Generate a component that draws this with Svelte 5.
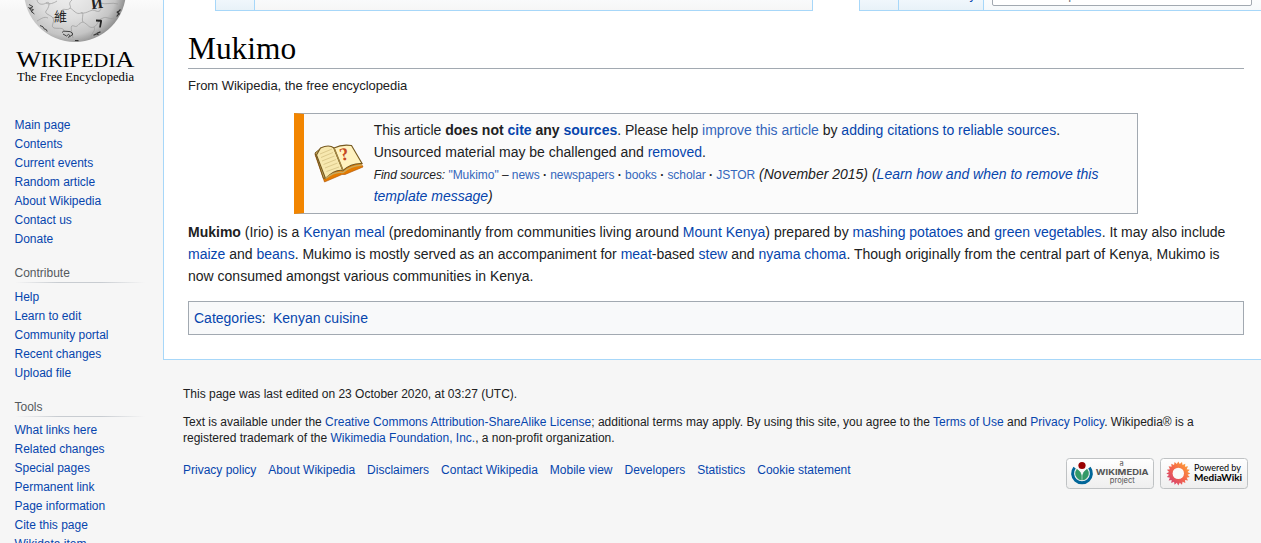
<script>
  const groups = [
    { title: '', items: ['Main page', 'Contents', 'Current events', 'Random article', 'About Wikipedia', 'Contact us', 'Donate'] },
    { title: 'Contribute', items: ['Help', 'Learn to edit', 'Community portal', 'Recent changes', 'Upload file'] },
    { title: 'Tools', items: ['What links here', 'Related changes', 'Special pages', 'Permanent link', 'Page information', 'Cite this page', 'Wikidata item'] }
  ];
  const footerLinks = ['Privacy policy', 'About Wikipedia', 'Disclaimers', 'Contact Wikipedia', 'Mobile view', 'Developers', 'Statistics', 'Cookie statement'];
  // Pointed outline of the sunflower mark
  const petals = 20;
  const sunflower = Array.from({ length: petals * 2 }, (_, i) => {
    const r = i % 2 ? 9.4 : 12;
    const a = (i * Math.PI) / petals;
    return `${(18.3 + r * Math.cos(a)).toFixed(2)},${(15.4 + r * Math.sin(a)).toFixed(2)}`;
  }).join(' ');
</script>

<div class="page">
  <aside>
    <svg class="logo" width="163" height="90" viewBox="0 0 163 90">
      <defs>
        <radialGradient id="globe" gradientUnits="userSpaceOnUse" cx="68" cy="-14" r="66">
          <stop offset="0" stop-color="#f4f4f4" /><stop offset=".5" stop-color="#dedede" /><stop offset=".75" stop-color="#c4c4c4" /><stop offset="1" stop-color="#6d6d6d" />
        </radialGradient>
      </defs>
      <circle cx="75" cy="-9" r="51" fill="url(#globe)" />
      <g fill="none" stroke="#999" stroke-width=".7">
        <path d="M37 0c1 5 6 5 9 3 5-3 3 5 0 8-2 3 5 4 7 7M46 3c3 2 8 0 11-2M72 0c-5 4 0 6-2 8-3 4-9-2-8 5 1 4-5 3-9 5M70 8c4 2 6 7 11 5 4-2 0 6 2 9M81 13c7 1 10-5 15-2 5 2 6-3 4-8M83 22c-5 1-5 6-9 4-5-2-2 6-1 12M83 22c5 2 6 7 11 5 5-3 3-7 9-9M53 18c2 5-3 8 1 10 6 1 9-1 10 3M94 27c2 4-2 5-3 10M37 21c4-2 7-5 11-3M103 18c4-2 6 2 11 0M100 3c7 2 11-1 18 1" />
      </g>
      <g fill="#222" class="glyphs">
        <text x="54" y="21" font-size="13">維</text>
        <text class="serif" x="91" y="8.5" font-size="15" transform="rotate(-8 97 4)">И</text>
        <path d="M96 19.6l5.2.2q1 .2.8 1.6l-1.2 6h-1.6l.8-5.6-4-.2z" />
        <path d="M62 32.5q1.5-2 4-1.2q5-.3 6.4 1.8q1 2.400-1.800 2.700M63 34l3.500 2 2-1.600 2 1.800-2.500 1.200" fill="none" stroke="#333" stroke-width=".9" />
        <path d="M29 4.500l4 2.200-3.300 1.600 3.800 1.400-2.500 1.600 3.400 2.700M28.500 7l4 5.500M40 25.500l3 1.300 1 2 2.300.8.9 1.900" fill="none" stroke="#333" stroke-width=".9" />
        <path d="M120.500 9.500l-3 3.200 1.500.8-2.300 3M117 11.500l2.500 3M93.500 35.300l3.500-1.600 1.400 1M97 33.200l3.500-1.300M75 40.500l3.500.2" fill="none" stroke="#333" stroke-width="1.200" />
      </g>
      <g class="wordmark">
        <text x="16" y="67" font-size="24" textLength="118.500" lengthAdjust="spacingAndGlyphs">W<tspan font-size="18.500">IKIPEDI</tspan>A</text>
        <text x="17" y="81" font-size="13.500" textLength="117" lengthAdjust="spacingAndGlyphs">The Free Encyclopedia</text>
      </g>
    </svg>
    {#each groups as g}
      <nav>
        {#if g.title}<h3>{g.title}</h3>{/if}
        <ul>{#each g.items as item}<li><a href="#top">{item}</a></li>{/each}</ul>
      </nav>
    {/each}
  </aside>

  <div class="content">
    <div class="tabs">
      <span class="selected first"></span>
      <span class="tab talk"></span>
      <span class="tab blank"></span>
      <span class="selected read"></span>
      <span class="tab edit"></span>
      <span class="tab history"><span>View history</span></span>
      <span class="tab searchbar"><span class="search"><span>Search Wikipedia</span></span></span>
    </div>
    <main>
      <h1>Mukimo</h1>
      <div class="sub">From Wikipedia, the free encyclopedia</div>
      <div class="notice">
        <svg width="50" height="42" viewBox="0 0 50 42">
          <path d="M1 11.500 10.500 39 28 31.500 31 31.500 49 24 46 18 12 33Z" fill="#e57b00" stroke="#a94f00" stroke-width=".6" />
          <path d="M1 10 6.500 5.500 12 34.500 9.500 35.500Z" fill="#cfae62" stroke="#75581f" stroke-width="1" />
          <path d="M6.500 5Q15 1 20 5L29 27.500Q21 26 11.500 35.500L2.500 12Z" fill="#f7e8af" stroke="#75581f" stroke-width="1.100" />
          <path d="M20 5Q28 1 37.500 2.500L48 20.500Q37 20 29 27.500Z" fill="#fff2c0" stroke="#75581f" stroke-width="1.100" />
          <path d="M11.500 35.500Q21 28 29 29.500Q37 22.500 48 22" fill="none" stroke="#c9a95c" stroke-width="1.400" />
          <path d="M20 5 29 27.500" stroke="#a08443" stroke-width="1.600" />
          <path d="m6 11 12-5m-11 8.500 12-5m-11 8.500 12.500-5m-11 8.500 12.500-5m-11 8.500 12.500-5m-11 8.500 12.500-4.500" stroke="#dcc98c" stroke-width="1" />
          <text x="26" y="17" transform="rotate(-14 31 12)">?</text>
        </svg>
        <div class="notice-text">
          <div>This article <b>does not <a href="#top">cite</a> any <a href="#top">sources</a></b>. Please help <a class="ext" href="#top">improve this article</a> by <a href="#top">adding citations to reliable sources</a>.</div>
          <div>Unsourced material may be challenged and <a href="#top">removed</a>.</div>
          <div><small><i>Find sources:</i> <a class="ext" href="#top">"Mukimo"</a> – <a class="ext" href="#top">news</a> <b>·</b> <a class="ext" href="#top">newspapers</a> <b>·</b> <a class="ext" href="#top">books</a> <b>·</b> <a class="ext" href="#top">scholar</a> <b>·</b> <a class="ext" href="#top">JSTOR</a></small> <i>(November 2015)</i> <i>(<a href="#top">Learn how and when to remove this</a></i></div>
          <div><i><a href="#top">template message</a>)</i></div>
        </div>
      </div>
      <div class="article">
        <div><b>Mukimo</b> (Irio) is a <a href="#top">Kenyan meal</a> (predominantly from communities living around <a href="#top">Mount Kenya</a>) prepared by <a href="#top">mashing potatoes</a> and <a href="#top">green vegetables</a>. It may also include</div>
        <div><a href="#top">maize</a> and <a href="#top">beans</a>. Mukimo is mostly served as an accompaniment for <a href="#top">meat</a>-based <a href="#top">stew</a> and <a href="#top">nyama choma</a>. Though originally from the central part of Kenya, Mukimo is</div>
        <div>now consumed amongst various communities in Kenya.</div>
      </div>
      <div class="cats"><a href="#top">Categories</a>: <a class="cat" href="#top">Kenyan cuisine</a></div>
    </main>
    <footer>
      <p>This page was last edited on 23 October 2020, at 03:27 (UTC).</p>
      <p>Text is available under the <a href="#top">Creative Commons Attribution-ShareAlike License</a>; additional terms may apply. By using this site, you agree to the <a href="#top">Terms of Use</a> and <a href="#top">Privacy Policy</a>. Wikipedia® is a<br />registered trademark of the <a href="#top">Wikimedia Foundation, Inc.</a>, a non-profit organization.</p>
      <div class="bottom">
        <div class="links">{#each footerLinks as l}<a href="#top">{l}</a>{/each}</div>
        <div class="badges">
          <svg width="88" height="31" viewBox="0 0 88 31">
            <defs><linearGradient id="btn" x2="0" y2="1"><stop stop-color="#fff" /><stop offset="1" stop-color="#eee" /></linearGradient></defs>
            <rect x=".5" y=".5" width="87" height="30" rx="3" fill="url(#btn)" stroke="#bfc2c4" />
            <path d="M8.600 9.600A9.400 9.400 0 1 0 23.400 9.600" fill="none" stroke="#069" stroke-width="3" />
            <path d="M10.900 11.200A6.700 6.700 0 0 0 15.400 22V17.500Q15 13.500 10.900 11.200Z M21.100 11.200A6.700 6.700 0 0 1 16.600 22V17.500Q17 13.500 21.100 11.200Z" fill="#396" stroke="#396" stroke-width=".6" />
            <circle cx="16" cy="7.500" r="3.600" fill="#900" />
            <g class="wm"><text x="53.500" y="8" font-size="7.500">a</text><text class="name" x="29.700" y="17" font-size="8.200" textLength="53" lengthAdjust="spacingAndGlyphs">WIKIMEDIA</text><text x="43.800" y="24.500" font-size="7.800" textLength="25" lengthAdjust="spacingAndGlyphs">project</text></g>
          </svg>
          <svg width="88" height="31" viewBox="0 0 88 31">
            <defs><linearGradient id="sun" x1="1" y1="0" x2="0" y2="1"><stop stop-color="#ffb02e" /><stop offset=".5" stop-color="#f4664c" /><stop offset="1" stop-color="#c9347d" /></linearGradient></defs>
            <rect x=".5" y=".5" width="87" height="30" rx="3" fill="url(#btn)" stroke="#bfc2c4" />
            <polygon points={sunflower} fill="url(#sun)" />
            <circle cx="18.300" cy="15.400" r="5.700" fill="#fafafa" />
            <g class="mw"><text x="34" y="13" font-size="9" textLength="47" lengthAdjust="spacingAndGlyphs">Powered by</text><text class="name" x="34" y="22.500" font-size="9.500" textLength="48" lengthAdjust="spacingAndGlyphs">MediaWiki</text></g>
          </svg>
        </div>
      </div>
    </footer>
  </div>
</div>

<style>
  :global(body) { margin: 0; overflow: hidden; background: #f6f6f6; }
  .page { display: flex; width: 1261px; height: 543px; overflow: hidden; font-family: "Liberation Sans", Arial, sans-serif; color: #202122; background: #f6f6f6; }
  a { color: #0645ad; text-decoration: none; }
  .ext { color: #3366bb; }
  aside { width: 163px; flex: none; background: linear-gradient(#fbfbfb, #f6f6f6 12px); }
  .logo { display: block; margin-bottom: 26px; }
  .glyphs { font-family: "Noto Sans CJK SC", sans-serif; }
  .serif { font-family: "Liberation Serif", serif; font-weight: 700; }
  .wordmark { font-family: "Liberation Serif", serif; fill: #000; }
  nav { padding-left: 14.5px; font-size: 12px; }
  ul { list-style: none; margin: 0; padding: 0; }
  li { height: 19px; line-height: 19px; white-space: nowrap; }
  nav h3 { margin: 15px 18px 5px 0; height: 19px; line-height: 18px; font-size: 12px; font-weight: 400; color: #54595d; background: linear-gradient(to right, rgba(200,204,209,0), #c8ccd1 33%, #c8ccd1 66%, rgba(200,204,209,0)) bottom / 100% 1px no-repeat; }
  nav:last-child h3 { margin-bottom: 4px; }
  .content { width: 1098px; flex: none; }
  .tabs { display: flex; height: 11px; background: #fff; overflow: hidden; }
  .tabs > span { box-sizing: border-box; height: 11px; }
  .selected { background: #fff; }
  .first { width: 52px; border-left: 1px solid #a7d7f9; }
  .tab { background: linear-gradient(#f0f7fc, #e8f2f8); border-bottom: 1px solid #a7d7f9; border-left: 1px solid #a7d7f9; }
  .talk { width: 39px; }
  .blank { width: 559px; border-right: 1px solid #a7d7f9; background: linear-gradient(#f9fafb, #f6f6f6); }
  .read { width: 46px; }
  .edit { width: 39px; }
  .history { width: 85px; }
  .history span { display: block; margin: -12px 0 0 12px; font-size: 12px; line-height: 15px; color: #0645ad; white-space: nowrap; }
  .searchbar { width: 278px; display: flex; background: linear-gradient(#fbfcfd, #f6f9fb); }
  .search { box-sizing: border-box; width: 260px; height: 30px; margin: -24px 0 0 8px; border: 1px solid #a2a9b1; border-radius: 2px; background: #fff; }
  .search span { display: block; padding: 10px 6px; font-size: 13px; line-height: 15px; color: #72777d; }
  main { box-sizing: border-box; height: 349px; background: #fff; border-left: 1px solid #a7d7f9; border-bottom: 1px solid #a7d7f9; padding: 20px 17px 0 24px; }
  h1 { margin: 0; height: 37px; border-bottom: 1px solid #a2a9b1; font: 400 31.4px/36px "Liberation Serif", serif; color: #000; }
  .sub { font-size: 13px; line-height: 20px; margin-top: 7px; letter-spacing: -.05px; }
  .notice { box-sizing: border-box; width: 844px; height: 101px; margin: 17px 0 0 106px; border: 1px solid #a2a9b1; border-left: 10px solid #f28500; background: #fbfbfb; display: flex; align-items: center; padding: 0 0 2px 10px; font-size: 14px; line-height: 22px; white-space: nowrap; }
  .notice svg { flex: none; margin: 2px 9.7px 0 0; }
  .notice svg text { font: 700 18px "Liberation Serif", serif; fill: #c64a20; }
  .notice-text > div { height: 22px; }
  small { font-size: 12px; letter-spacing: -.045px; }
  .article { margin-top: 7px; font-size: 14px; line-height: 22px; white-space: nowrap; }
  .cats { box-sizing: border-box; height: 34px; margin-top: 14px; border: 1px solid #a2a9b1; background: #f8f9fa; padding: 0 5px; font-size: 14px; line-height: 32px; }
  .cat { margin-left: 3.5px; }
  footer { padding: 26px 13px 0 20px; font-size: 12px; line-height: 16px; white-space: nowrap; }
  footer p { margin: 0 0 12px; }
  .bottom { display: flex; justify-content: space-between; }
  .links { display: flex; gap: 12px; padding-top: 4px; }
  .badges { display: flex; gap: 6px; }
  .badges svg { display: block; }
  .wm { font-family: Inter, sans-serif; fill: #555; }
  .wm .name { font-weight: 700; }
  .mw { font-family: Lato, sans-serif; fill: #000; }
  .mw .name { font-weight: 700; }
</style>
